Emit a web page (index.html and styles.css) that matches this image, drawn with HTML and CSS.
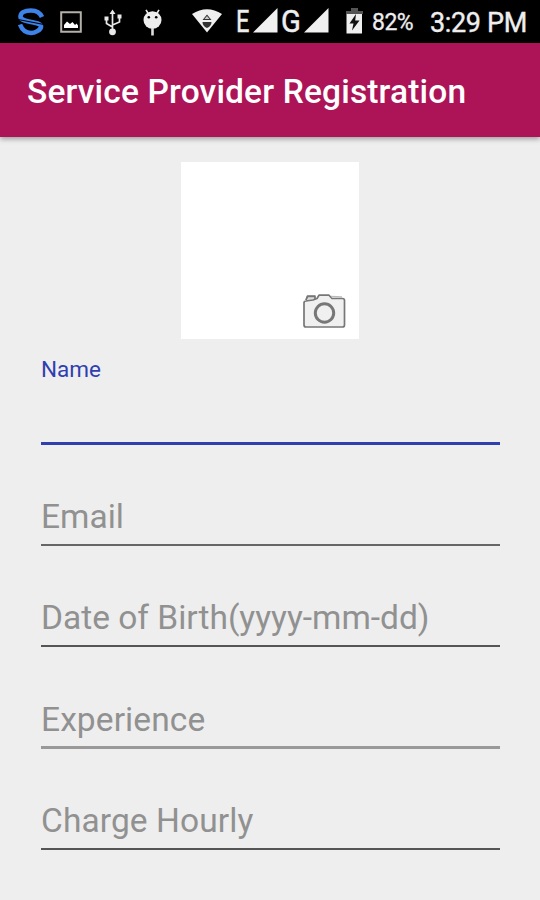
FILE: index.html
```
<!DOCTYPE html>
<html lang="en">
<head>
<meta charset="utf-8">
<title>Service Provider Registration</title>
<link rel="stylesheet" href="styles.css">
</head>
<body>
<div class="status">
  <svg class="logo" width="28" height="30" viewBox="0 0 28 30" fill="none" stroke="#3d82e8" stroke-width="4.600"><path d="M25 10C23 5.500 19 3.500 14 3.500C7 3.500 3.500 6 3.500 9.500C3.500 13 8 13.500 14 15C20 16.500 24.500 16.500 24 20C23.500 23 18 26 14 26C9 26 5 22.500 3 17.500"/><path d="M1 12.500L27 17.500" stroke="#000" stroke-width="1.200"/></svg>
  <svg class="photo" width="22" height="22" viewBox="0 0 22 22"><path d="M1.200 1.200H20.800V20.800H1.200Z" fill="none" stroke="#b5b1aa" stroke-width="2"/><path d="M4 17V14L7 10.500L10 13L12.500 11L15 14L16.500 12.500L18 14.500V17Z" fill="#fff"/></svg>
  <svg class="usb" width="20" height="28" viewBox="0 0 20 28" fill="none" stroke="#e8e8e8" stroke-width="1.700"><path d="M9.500 4V23M9.500 18L3.500 14.500V10M9.500 16L16.500 13V8"/><path d="M9.500 .5L12.500 5H6.500ZM1.500 7.500H5.500V11.500H1.500ZM14.500 5.500H18.500V9.500H14.500Z" fill="#e8e8e8" stroke="none"/><circle cx="9.500" cy="22.800" r="3.400" fill="#e8e8e8" stroke="none"/></svg>
  <svg class="droid" width="20" height="28" viewBox="0 0 20 28"><ellipse cx="9.500" cy="11" rx="9" ry="8.800" fill="#eee"/><path d="M3 .8L5.500 5M16 .8L13.500 5" stroke="#eee" stroke-width="1.600"/><path d="M9.500 19V26.500" stroke="#ddd" stroke-width="2.600"/><circle cx="5.800" cy="8.200" r="1.300"/><circle cx="13.200" cy="8.200" r="1.300"/></svg>
  <svg class="wifi" width="30" height="24" viewBox="0 0 30 24"><path d="M0 5Q15-4.500 30 5L15 23.500Z" fill="#f0f0f0"/><path d="M10.500 11L15 5.500L19.500 11ZM10.500 13H19.500Q19.500 17 15 19Q10.500 17 10.500 13Z" fill="#333"/><path d="M12.500 10L15 7L17.500 10Z" fill="#ccc"/></svg>
  <span class="net e">E</span>
  <svg class="signal" width="25" height="25" viewBox="0 0 25 25"><path d="M0 24.500L24.500 0V24.500Z" fill="#f0f0f0"/></svg>
  <span class="net g">G</span>
  <svg class="signal" width="25" height="25" viewBox="0 0 25 25"><path d="M0 24.500L24.500 0V24.500Z" fill="#f0f0f0"/></svg>
  <svg class="battery" width="17" height="26" viewBox="0 0 17 26"><path d="M0 6V3H5V0H12V3H17V6Z" fill="#555"/><path d="M.5 6H16V25.500H.5Z" fill="#f0f0f0"/><path d="M10 6L3.500 15.500H7.500L6 22.500L13.500 12.500H9.200Z" fill="#111"/></svg>
  <span class="percent">82%</span>
  <span class="time">3:29 PM</span>
</div>
<header class="bar"><h1>Service Provider Registration</h1></header>
<main>
  <div class="avatar">
    <svg width="43" height="35" viewBox="0 0 43 35" fill="#f0f0f0" stroke="#777" stroke-width="1.700" stroke-linejoin="round"><path d="M3 6L4.500 2H12V5.500L9 7.500L2 8.500" fill="#ddd"/><path d="M3 7L10 6L14 4.500L16 1.200H26L29 4.500H39.500Q41.500 4.500 41.500 6.500V31Q41.500 33 39.500 33H3Q1 33 1 31V9Q1 7 3 7Z"/><path d="M3 6L4.500 2.500H12" fill="none" stroke-width="1.300"/><path d="M28 2.500L39 3" stroke="#bbb" stroke-width="1.300"/><circle cx="21.500" cy="19" r="9.200" stroke-width="3"/></svg>
  </div>
  <div class="field name"><span>Name</span></div>
  <div class="field email"><span>Email</span></div>
  <div class="field dob"><span>Date of Birth(yyyy-mm-dd)</span></div>
  <div class="field experience"><span>Experience</span></div>
  <div class="field charge"><span>Charge Hourly</span></div>
</main>
</body>
</html>
```
FILE: styles.css
```
* { box-sizing: border-box; }
body { margin: 0; width: 540px; height: 900px; overflow: hidden; background: #eee; font-family: Roboto, sans-serif; }
.status { height: 43px; background: #000; color: #eee; display: flex; align-items: flex-start; white-space: nowrap; }
.status > * { flex: none; }
.logo { margin: 7px 0 0 17px; }
.photo { margin: 11px 0 0 15px; }
.usb { margin: 9px 0 0 21px; }
.droid { margin: 9px 0 0 20px; }
.wifi { margin: 9px 0 0 29px; }
.net { font-size: 31px; line-height: 43px; }
.e { width: 17px; margin-left: 14px; transform: scaleX(.76); transform-origin: left; -webkit-text-stroke: .5px #eee; }
.g { width: 23px; margin-left: 3px; transform: scaleX(.94); transform-origin: left; -webkit-text-stroke: .5px #eee; }
.signal { margin-top: 8px; }
.battery { margin: 8px 0 0 17px; }
.percent { width: 42px; margin-left: 9px; font-size: 23px; line-height: 46px; letter-spacing: -.5px; -webkit-text-stroke: .3px #eee; }
.time { margin-left: 16px; font-size: 27px; line-height: 47px; letter-spacing: -.35px; -webkit-text-stroke: .4px #eee; }
.bar { height: 94px; padding-left: 27px; background: #ad1457; box-shadow: 0 2px 5px rgba(0,0,0,.35); display: flex; align-items: center; }
h1 { margin: 4px 0 0; color: #fff; font-size: 33.500px; font-weight: 500; line-height: 40px; letter-spacing: .16px; white-space: nowrap; }
main { padding: 25px 40px 0 41px; }
.avatar { width: 178px; height: 177px; margin-left: 140px; padding: 0 13px 10px 0; background: #fff; display: flex; align-items: flex-end; justify-content: flex-end; }
.field { height: 101px; border-bottom: 2px solid #666; color: #919191; font-size: 33.500px; line-height: 40px; padding-top: 52px; white-space: nowrap; }
.name { height: 106px; padding-top: 10px; border-bottom: 3px solid #303fb0; color: #303fb0; font-size: 22.500px; }
.dob { border-bottom-color: #555; }
.experience { height: 102px; padding-top: 53px; border-bottom: 3px solid #999; letter-spacing: .1px; }
.charge { letter-spacing: .1px; border-bottom-color: #555; }
```
